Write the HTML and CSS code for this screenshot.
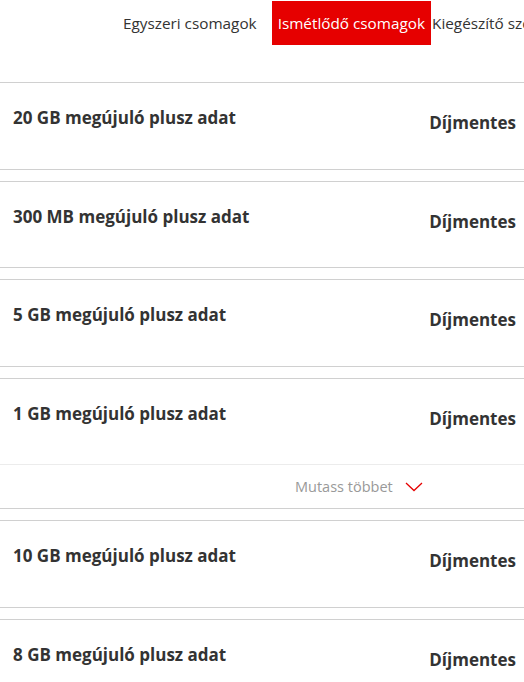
FILE: index.html
```html
<!DOCTYPE html>
<html lang="hu">
<head>
<meta charset="utf-8">
<link rel="stylesheet" href="styles.css">
</head>
<body>
<nav class="tabs">
  <span class="tab">Egyszeri csomagok</span>
  <span class="tab tab-active">Ismétlődő csomagok</span>
  <span class="tab">Kiegészítő szolgáltatások</span>
</nav>
<main class="list">
  <section class="card"><div class="item"><h3 class="title">20 GB megújuló plusz adat</h3><span class="price">Díjmentes</span></div></section>
  <section class="card"><div class="item"><h3 class="title">300 MB megújuló plusz adat</h3><span class="price">Díjmentes</span></div></section>
  <section class="card"><div class="item"><h3 class="title">5 GB megújuló plusz adat</h3><span class="price">Díjmentes</span></div></section>
  <section class="card">
    <div class="item"><h3 class="title">1 GB megújuló plusz adat</h3><span class="price">Díjmentes</span></div>
    <div class="more"><span class="more-text">Mutass többet</span>
      <svg class="chev" width="18" height="10" viewBox="0 0 18 10"><path d="M1 1 L9 8.5 L17 1" fill="none" stroke="#e60000" stroke-width="1.3"/></svg>
    </div>
  </section>
  <section class="card"><div class="item"><h3 class="title">10 GB megújuló plusz adat</h3><span class="price">Díjmentes</span></div></section>
  <section class="card"><div class="item"><h3 class="title">8 GB megújuló plusz adat</h3><span class="price">Díjmentes</span></div></section>
</main>
</body>
</html>
```
FILE: styles.css
```css
html, body {
  margin: 0;
  padding: 0;
  background: #fff;
  overflow: hidden;
}
body {
  font-family: "Open Sans", "Liberation Sans", sans-serif;
  color: #333;
}
.tabs {
  display: flex;
  align-items: stretch;
  height: 44px;
  margin-top: 1px;
  padding-left: 123px;
  white-space: nowrap;
  overflow: hidden;
}
.tab {
  display: flex;
  align-items: center;
  font-size: 15.3px;
  color: #333;
  margin-right: 15px;
  flex: none;
}
.tab-active {
  background: #e60000;
  color: #fff;
  padding: 0 6px;
  margin-right: 1px;
}
.list {
  margin-top: 37px;
  display: flex;
  flex-direction: column;
  gap: 11px;
}
.card {
  border-top: 1px solid #d0d0d0;
  border-bottom: 1px solid #d0d0d0;
}
.item {
  height: 85.6px;
  display: flex;
  justify-content: space-between;
  align-items: flex-start;
  padding: 0 8px 0 13px;
}
.title {
  margin: 23px 0 0;
  font-size: 17px;
  line-height: 23px;
  font-weight: 700;
  color: #333;
}
.price {
  margin-top: 28px;
  font-size: 17px;
  line-height: 23px;
  font-weight: 700;
  color: #333;
}
.more {
  border-top: 1px solid #ececec;
  height: 43px;
  display: flex;
  align-items: center;
  padding-left: 295px;
  gap: 12px;
}
.more-text {
  font-size: 14.5px;
  color: #999;
}
.chev {
  display: block;
}
```
